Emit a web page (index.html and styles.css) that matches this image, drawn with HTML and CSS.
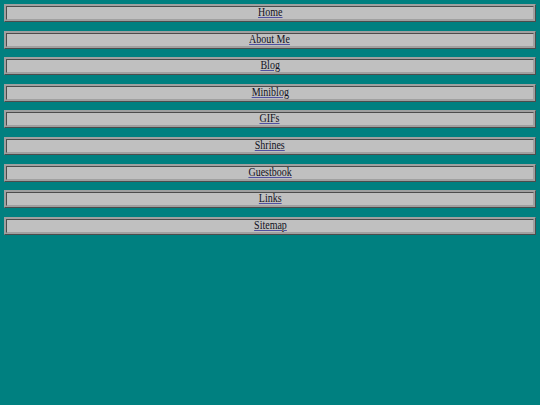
FILE: index.html
```html
<!DOCTYPE html>
<html>
<head>
<meta charset="utf-8">
<link rel="stylesheet" href="styles.css">
</head>
<body>
<nav class="nav">
<a class="btn" href="#"><span class="label">Home</span></a>
<a class="btn" href="#"><span class="label">About Me</span></a>
<a class="btn" href="#"><span class="label">Blog</span></a>
<a class="btn" href="#"><span class="label">Miniblog</span></a>
<a class="btn" href="#"><span class="label">GIFs</span></a>
<a class="btn" href="#"><span class="label">Shrines</span></a>
<a class="btn" href="#"><span class="label">Guestbook</span></a>
<a class="btn" href="#"><span class="label">Links</span></a>
<a class="btn" href="#"><span class="label">Sitemap</span></a>
</nav>
</body>
</html>
```
FILE: styles.css
```css
html, body {
  margin: 0;
  background: #008080;
}
.nav {
  display: flex;
  flex-direction: column;
  gap: 8.6px;
  padding: 4px;
}
.btn {
  display: block;
  background: #c0c0c0;
  border: 3px ridge #a0a0a0;
  color: #111122;
  text-align: center;
  font-family: "Liberation Serif", serif;
  font-size: 12.5px;
  line-height: 11px;
  height: 12px;
  text-decoration: none;
}
.label {
  display: inline-block;
  transform: scaleX(0.8);
  text-decoration: underline;
  text-decoration-color: #5050a0;
}
```
